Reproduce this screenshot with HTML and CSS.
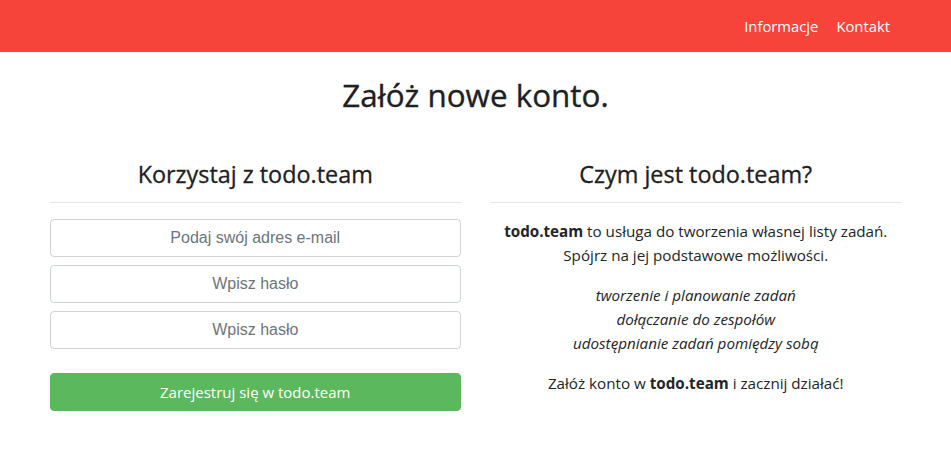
FILE: index.html
```html
<!DOCTYPE html>
<html lang="pl">
<head>
<meta charset="utf-8">
<title>todo.team</title>
<link rel="stylesheet" href="styles.css">
</head>
<body>
<nav class="navbar">
  <a class="nav-link" href="#">Informacje</a>
  <a class="nav-link" href="#">Kontakt</a>
</nav>
<main class="container">
  <h1 class="page-title">Załóż nowe konto.</h1>
  <div class="columns">
    <section class="col">
      <h3 class="col-title">Korzystaj z todo.team</h3>
      <hr class="divider">
      <form class="signup">
        <input class="field" type="email" placeholder="Podaj swój adres e-mail">
        <input class="field" type="password" placeholder="Wpisz hasło">
        <input class="field" type="password" placeholder="Wpisz hasło">
        <button class="btn-submit" type="button">Zarejestruj się w todo.team</button>
      </form>
    </section>
    <section class="col">
      <h3 class="col-title">Czym jest todo.team?</h3>
      <hr class="divider">
      <div class="about">
        <p><strong>todo.team</strong> to usługa do tworzenia własnej listy zadań.<br>Spójrz na jej podstawowe możliwości.</p>
        <p class="features"><em>tworzenie i planowanie zadań</em><br><em>dołączanie do zespołów</em><br><em>udostępnianie zadań pomiędzy sobą</em></p>
        <p>Załóż konto w <strong>todo.team</strong> i zacznij działać!</p>
      </div>
    </section>
  </div>
</main>
</body>
</html>
```
FILE: styles.css
```css
* { box-sizing: border-box; }
body {
  margin: 0;
  font-family: "Open Sans", "Noto Sans", sans-serif;
  font-size: 15.2px;
  line-height: 24px;
  color: #212529;
  background: #fff;
}
.navbar {
  height: 52px;
  background: #f6443a;
  display: flex;
  justify-content: flex-end;
  align-items: center;
  gap: 18px;
  padding-right: 61px;
}
.nav-link {
  color: #fff;
  text-decoration: none;
  font-size: 14.8px;
}
.container {
  padding: 0 50px;
}
.page-title {
  margin: 24px 0 0;
  font-size: 31.4px;
  font-weight: 500;
  line-height: 38px;
  text-align: center;
  color: #1d2124;
  -webkit-text-stroke: 0.35px #1d2124;
}
.columns {
  display: grid;
  grid-template-columns: 1fr 1fr;
  gap: 30px;
  margin-top: 48px;
}
.col-title {
  margin: 0;
  font-size: 23.4px;
  font-weight: 500;
  line-height: 24px;
  text-align: center;
  color: #1d2124;
  -webkit-text-stroke: 0.3px #1d2124;
}
.divider {
  margin: 16px 0;
  border: 0;
  border-top: 1px solid rgba(0,0,0,.1);
}
.signup {
  display: flex;
  flex-direction: column;
  gap: 8px;
}
.field {
  height: 38px;
  padding: 6px 12px;
  font-family: "Liberation Sans", Arial, sans-serif;
  font-size: 16px;
  text-align: center;
  color: #495057;
  border: 1px solid #ced4da;
  border-radius: 4px;
  background: #fff;
}
.field::placeholder { color: #6c757d; opacity: 1; }
.btn-submit {
  margin-top: 16px;
  height: 38px;
  font-family: inherit;
  font-size: 15px;
  color: #fff;
  background: #5cb85c;
  border: 1px solid #5cb85c;
  border-radius: 4px;
}
.about { text-align: center; }
.about p { margin: 0 0 16px; }
.about p:first-child { margin-top: 1px; }
.about strong { font-weight: 700; }
```
